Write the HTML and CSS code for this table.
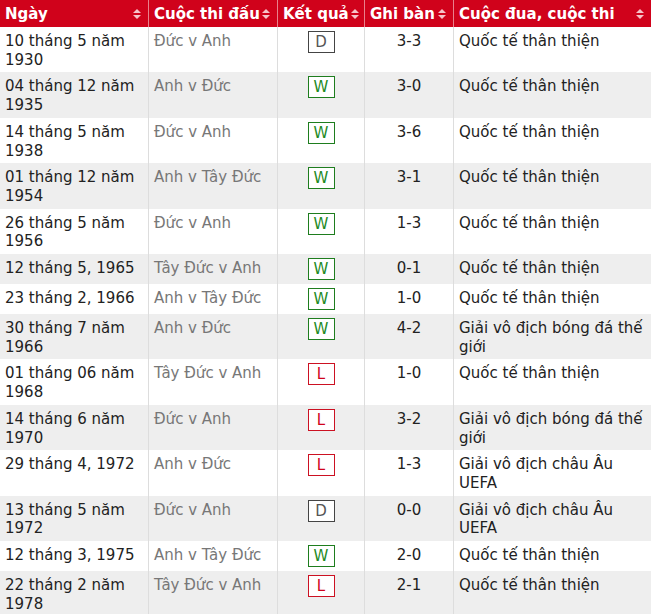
FILE: index.html
```html
<!DOCTYPE html>
<html lang="vi">
<head>
<meta charset="utf-8">
<title>Kết quả</title>
<link rel="stylesheet" href="styles.css">
</head>
<body>
<table class="matches">
  <thead>
    <tr>
      <th class="c-date"><div class="th-in"><span>Ngày</span><svg class="sort" viewBox="0 0 8 10" width="8" height="10"><path d="M4 0 L8 4 L0 4 Z M0 6 L8 6 L4 10 Z"/></svg></div></th>
      <th class="c-match"><div class="th-in"><span>Cuộc thi đấu</span><svg class="sort" viewBox="0 0 8 10" width="8" height="10"><path d="M4 0 L8 4 L0 4 Z M0 6 L8 6 L4 10 Z"/></svg></div></th>
      <th class="c-res"><div class="th-in"><span>Kết quả</span><svg class="sort" viewBox="0 0 8 10" width="8" height="10"><path d="M4 0 L8 4 L0 4 Z M0 6 L8 6 L4 10 Z"/></svg></div></th>
      <th class="c-score"><div class="th-in"><span>Ghi bàn</span><svg class="sort" viewBox="0 0 8 10" width="8" height="10"><path d="M4 0 L8 4 L0 4 Z M0 6 L8 6 L4 10 Z"/></svg></div></th>
      <th class="c-comp"><div class="th-in"><span>Cuộc đua, cuộc thi</span><svg class="sort" viewBox="0 0 8 10" width="8" height="10"><path d="M4 0 L8 4 L0 4 Z M0 6 L8 6 L4 10 Z"/></svg></div></th>
    </tr>
  </thead>
  <tbody>
    <tr><td>10 tháng 5 năm 1930</td><td class="match">Đức v Anh</td><td class="res"><span class="badge d">D</span></td><td class="score">3-3</td><td>Quốc tế thân thiện</td></tr>
    <tr><td>04 tháng 12 năm 1935</td><td class="match">Anh v Đức</td><td class="res"><span class="badge w">W</span></td><td class="score">3-0</td><td>Quốc tế thân thiện</td></tr>
    <tr><td>14 tháng 5 năm 1938</td><td class="match">Đức v Anh</td><td class="res"><span class="badge w">W</span></td><td class="score">3-6</td><td>Quốc tế thân thiện</td></tr>
    <tr><td>01 tháng 12 năm 1954</td><td class="match">Anh v Tây Đức</td><td class="res"><span class="badge w">W</span></td><td class="score">3-1</td><td>Quốc tế thân thiện</td></tr>
    <tr><td>26 tháng 5 năm 1956</td><td class="match">Đức v Anh</td><td class="res"><span class="badge w">W</span></td><td class="score">1-3</td><td>Quốc tế thân thiện</td></tr>
    <tr><td>12 tháng 5, 1965</td><td class="match">Tây Đức v Anh</td><td class="res"><span class="badge w">W</span></td><td class="score">0-1</td><td>Quốc tế thân thiện</td></tr>
    <tr><td>23 tháng 2, 1966</td><td class="match">Anh v Tây Đức</td><td class="res"><span class="badge w">W</span></td><td class="score">1-0</td><td>Quốc tế thân thiện</td></tr>
    <tr><td>30 tháng 7 năm 1966</td><td class="match">Anh v Đức</td><td class="res"><span class="badge w">W</span></td><td class="score">4-2</td><td>Giải vô địch bóng đá thế giới</td></tr>
    <tr><td>01 tháng 06 năm 1968</td><td class="match">Tây Đức v Anh</td><td class="res"><span class="badge l">L</span></td><td class="score">1-0</td><td>Quốc tế thân thiện</td></tr>
    <tr><td>14 tháng 6 năm 1970</td><td class="match">Đức v Anh</td><td class="res"><span class="badge l">L</span></td><td class="score">3-2</td><td>Giải vô địch bóng đá thế giới</td></tr>
    <tr><td>29 tháng 4, 1972</td><td class="match">Anh v Đức</td><td class="res"><span class="badge l">L</span></td><td class="score">1-3</td><td>Giải vô địch châu Âu UEFA</td></tr>
    <tr><td>13 tháng 5 năm 1972</td><td class="match">Đức v Anh</td><td class="res"><span class="badge d">D</span></td><td class="score">0-0</td><td>Giải vô địch châu Âu UEFA</td></tr>
    <tr><td>12 tháng 3, 1975</td><td class="match">Anh v Tây Đức</td><td class="res"><span class="badge w">W</span></td><td class="score">2-0</td><td>Quốc tế thân thiện</td></tr>
    <tr><td>22 tháng 2 năm 1978</td><td class="match">Tây Đức v Anh</td><td class="res"><span class="badge l">L</span></td><td class="score">2-1</td><td>Quốc tế thân thiện</td></tr>
  </tbody>
</table>
</body>
</html>
```
FILE: styles.css
```css
html, body {
  margin: 0;
  padding: 0;
  background: #ffffff;
}

.matches {
  width: 651px;
  table-layout: fixed;
  border-collapse: separate;
  border-spacing: 0;
  font-family: "DejaVu Sans", Verdana, sans-serif;
  font-size: 15px;
  color: #222222;
}

.matches th,
.matches td {
  box-sizing: border-box;
}

.matches th {
  background: #d0021b;
  color: #ffffff;
  font-weight: bold;
  text-align: left;
  height: 27px;
  padding: 0 7px 0 5px;
  border-right: 1px solid #e9818c;
  white-space: nowrap;
}

.matches th:last-child {
  border-right: none;
}

.c-date { width: 149px; }
.c-match { width: 129px; }
.c-res { width: 87px; }
.c-score { width: 89px; }
.c-comp { width: 197px; }

.th-in {
  display: flex;
  align-items: center;
  justify-content: space-between;
  gap: 2px;
}

.sort {
  flex: none;
  fill: #f6c3c9;
}

.matches td {
  padding: 5px 5px 3px;
  line-height: 18.7px;
  vertical-align: top;
  border-right: 1px solid #dddddd;
}

.matches td:last-child {
  border-right: none;
}

.matches tbody tr:nth-child(even) td {
  background: #eeeeee;
}

.match {
  color: #777777;
}

.res {
  text-align: center;
}

.score {
  text-align: center;
}

.badge {
  display: inline-block;
  box-sizing: border-box;
  width: 27px;
  height: 22px;
  line-height: 20px;
  margin: -1px 0 1px;
  border: 1px solid;
  text-align: center;
  vertical-align: top;
  background: #ffffff;
}

.badge.d {
  color: #555555;
  border-color: #444444;
}

.badge.w {
  color: #1e8a1e;
  border-color: #1e7d1e;
}

.badge.l {
  color: #d0021b;
  border-color: #cc1122;
}
```
